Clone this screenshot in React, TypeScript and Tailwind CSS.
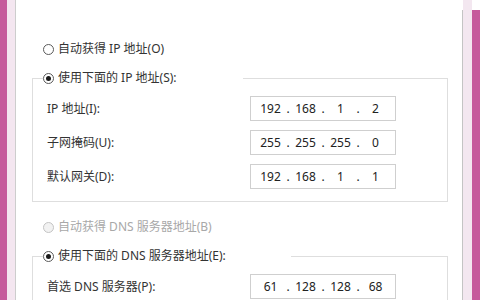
import React from "react";

type Row = { label: string; ip: string[] };

const ipRows: Row[] = [
  { label: "IP 地址(I):", ip: ["192", "168", "1", "2"] },
  { label: "子网掩码(U):", ip: ["255", "255", "255", "0"] },
  { label: "默认网关(D):", ip: ["192", "168", "1", "1"] },
];

const dnsRows: Row[] = [{ label: "首选 DNS 服务器(P):", ip: ["61", "128", "128", "68"] }];

function Radio({ checked, disabled }: { checked?: boolean; disabled?: boolean }) {
  return (
    <span
      className={`flex h-[11px] w-[11px] shrink-0 items-center justify-center rounded-full border ${
        disabled ? "border-[#c4c4c4] bg-[#f2f2f2]" : "border-[#5a5a5a] bg-white"
      }`}
    >
      {checked && <span className="h-[5px] w-[5px] rounded-full bg-[#1a1a1a]" />}
    </span>
  );
}

function IpBox({ parts }: { parts: string[] }) {
  return (
    <div className="flex h-[25px] w-[146px] items-center border border-[#cfcfcf] bg-white pl-[5px] text-[12px] text-[#222]">
      {parts.map((p, i) => (
        <React.Fragment key={i}>
          <span className="w-[29px] text-center">{p}</span>
          {i < 3 && <span className="w-[6px] text-center">.</span>}
        </React.Fragment>
      ))}
    </div>
  );
}

function Rows({ rows }: { rows: Row[] }) {
  return (
    <div className="flex flex-col gap-[9px]">
      {rows.map((r) => (
        <div key={r.label} className="flex items-center pl-[14px]">
          <span className="w-[203px] text-[12px] text-[#333]">{r.label}</span>
          <IpBox parts={r.ip} />
        </div>
      ))}
    </div>
  );
}

export default function App() {
  return (
    <div className="flex h-[300px] w-[480px] overflow-hidden bg-white font-['Noto_Sans','Noto_Sans_CJK_SC',sans-serif]">
      {/* left window frame */}
      <div className="w-[7px] bg-[#c65a9c]" />
      <div className="w-[8px] bg-[#f4e6f0]" />
      <div className="w-[1px] bg-[#cdcdcd]" />

      <div className="flex w-[446px] flex-col">
        {/* cut-off annotation above */}
        <div className="relative h-[8px] overflow-hidden">
          <span className="absolute left-[140px] top-[-38px] text-[40px] leading-[46px] text-[#e0336f]">(</span>
          <span className="absolute left-[316px] top-[-36px] text-[40px] font-bold leading-[46px] text-[#333]">y</span>
        </div>

        <div className="mt-[41px] ml-[27px] flex h-[16px] items-center gap-[4px] text-[12px] text-[#333]">
          <Radio />
          <span>自动获得 IP 地址(O)</span>
        </div>

        <fieldset className="mt-[13px] ml-[16px] mr-[14px] border border-[#dedede] pb-[12px]">
          <legend className="ml-[10px] w-[200px]">
            <span className="flex h-[16px] items-center gap-[4px] text-[12px] text-[#333]">
              <Radio checked />
              <span>使用下面的 IP 地址(S):</span>
            </span>
          </legend>
          <div className="mt-[10px]">
            <Rows rows={ipRows} />
          </div>
        </fieldset>

        <div className="mt-[17px] ml-[27px] flex h-[16px] items-center gap-[4px] text-[12px] text-[#a8a8a8]">
          <Radio disabled />
          <span>自动获得 DNS 服务器地址(B)</span>
        </div>

        <fieldset className="mt-[13px] ml-[16px] mr-[14px] border border-[#dedede] pb-[12px]">
          <legend className="ml-[10px] w-[248px]">
            <span className="flex h-[16px] items-center gap-[4px] text-[12px] text-[#333]">
              <Radio checked />
              <span>使用下面的 DNS 服务器地址(E):</span>
            </span>
          </legend>
          <div className="mt-[10px]">
            <Rows rows={dnsRows} />
          </div>
        </fieldset>
      </div>

      {/* right window frame */}
      <div className="mt-[10px] w-[1px] bg-[#c4c4c4]" />
      <div className="w-[9px] bg-[#f3e7f0]" />
      <div className="mt-[10px] w-[8px] bg-[#c65a9c]" />
    </div>
  );
}
